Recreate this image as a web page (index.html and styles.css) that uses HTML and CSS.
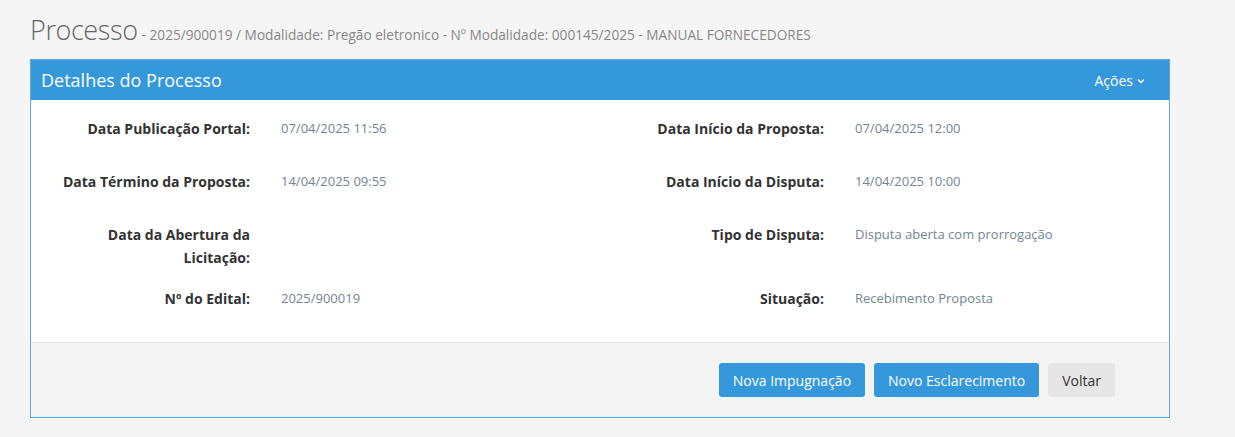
FILE: index.html
```html
<!DOCTYPE html>
<html lang="pt">
<head>
<meta charset="utf-8">
<title>Processo</title>
<link rel="stylesheet" href="styles.css">
</head>
<body>
<div class="page">
  <h1 class="page-title">Processo <small>- 2025/900019 / Modalidade: Pregão eletronico - Nº Modalidade: 000145/2025 - MANUAL FORNECEDORES</small></h1>
  <div class="panel">
    <div class="panel-heading">
      <span class="panel-title">Detalhes do Processo</span>
      <span class="actions">Ações <svg class="chev" width="8" height="6" viewBox="0 0 8 6"><path d="M1 1.5 L4 4.5 L7 1.5" fill="none" stroke="#fff" stroke-width="1.4"/></svg></span>
    </div>
    <div class="panel-body">
      <div class="details">
        <div class="lbl">Data Publicação Portal:</div>
        <div class="val">07/04/2025 11:56</div>
        <div class="lbl">Data Início da Proposta:</div>
        <div class="val">07/04/2025 12:00</div>

        <div class="lbl">Data Término da Proposta:</div>
        <div class="val">14/04/2025 09:55</div>
        <div class="lbl">Data Início da Disputa:</div>
        <div class="val">14/04/2025 10:00</div>

        <div class="lbl">Data da Abertura da Licitação:</div>
        <div class="val"></div>
        <div class="lbl">Tipo de Disputa:</div>
        <div class="val">Disputa aberta com prorrogação</div>

        <div class="lbl">Nº do Edital:</div>
        <div class="val">2025/900019</div>
        <div class="lbl">Situação:</div>
        <div class="val">Recebimento Proposta</div>
      </div>
    </div>
    <div class="panel-footer">
      <button class="btn btn-primary">Nova Impugnação</button>
      <button class="btn btn-primary">Novo Esclarecimento</button>
      <button class="btn btn-default">Voltar</button>
    </div>
  </div>
</div>
</body>
</html>
```

FILE: styles.css
```css
* { box-sizing: border-box; }
html, body { margin: 0; padding: 0; }
body {
  background: #f5f5f5;
  font-family: "Open Sans", "Liberation Sans", sans-serif;
  color: #333;
  width: 1235px;
  height: 437px;
  overflow: hidden;
}
.page {
  padding: 10px 65px 0 30px;
}
.page-title {
  margin: 0 0 9px 0;
  height: 40px;
  display: flex;
  align-items: baseline;
  gap: 4px;
  font-size: 27px;
  font-weight: 300;
  color: #666;
  line-height: 40px;
  letter-spacing: -0.4px;
  white-space: nowrap;
}
.page-title small {
  font-size: 13.65px;
  color: #888;
  font-weight: 400;
  letter-spacing: 0;
}
.panel {
  width: 1140px;
  border: 1px solid #5aa9e0;
  background: #fff;
}
.panel-heading {
  background: #3498db;
  color: #fff;
  height: 40px;
  display: flex;
  align-items: center;
  justify-content: space-between;
  padding: 0 24px 0 10px;
}
.panel-title {
  font-size: 18px;
  font-weight: 400;
}
.actions {
  font-size: 14px;
  display: flex;
  align-items: center;
  gap: 4px;
}
.chev { margin-top: 1px; }
.panel-body {
  padding: 10px 0 0 0;
}
.details {
  display: grid;
  grid-template-columns: 219px 288px 224px 1fr;
  column-gap: 31px;
  padding-bottom: 9px;
}
.lbl, .val {
  min-height: 53px;
  padding: 7px 0 11px 0;
  line-height: 23px;
}
.lbl {
  text-align: right;
  padding-left: 15px;
  font-weight: 700;
  font-size: 14px;
  color: #333;
}
.val {
  font-size: 13px;
  color: #738594;
}
.panel-footer {
  background: #f4f4f4;
  border-top: 1px solid #e3e3e3;
  padding: 20px 54px 20px 0;
  display: flex;
  justify-content: flex-end;
  gap: 9px;
}
.btn {
  font-family: inherit;
  font-size: 14px;
  height: 34px;
  padding: 0 14px;
  border: none;
  border-radius: 3px;
  cursor: pointer;
}
.btn-primary { background: #3498db; color: #fff; }
.btn-default { background: #e6e6e6; color: #333; }
```
